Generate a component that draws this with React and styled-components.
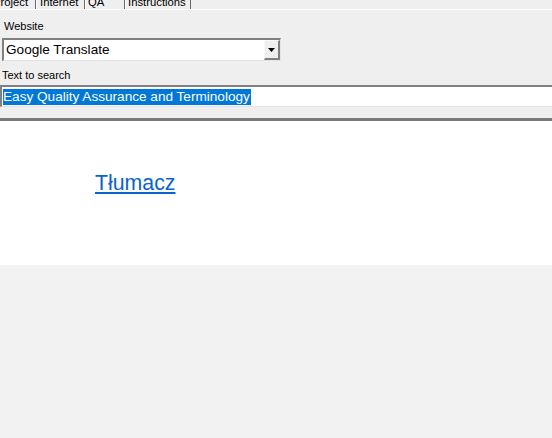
import React from 'react';
import styled, { createGlobalStyle } from 'styled-components';

const GlobalStyle = createGlobalStyle`
  html, body {
    margin: 0;
    padding: 0;
    background: #f2f2f2;
  }
  body {
    font-family: "Liberation Sans", Arial, sans-serif;
  }
`;

const tabs = [
  { name: 'Project', width: 36, first: true },
  { name: 'Internet', width: 49, active: true },
  { name: 'QA', width: 40 },
  { name: 'Instructions', width: 66 },
];

export default function App() {
  return (
    <>
      <GlobalStyle />
      <S_Page>
        <S_Panel>
          <S_TabStrip>
            {tabs.map((tab) => (
              <S_Tab
                key={tab.name}
                $active={tab.active}
                $first={tab.first}
                $width={tab.width}
              >
                {tab.name}
              </S_Tab>
            ))}
          </S_TabStrip>
          <S_Label $indent={4} $top={10} $bottom={5}>Website</S_Label>
          <S_Select>
            <S_SelectValue>Google Translate</S_SelectValue>
            <S_DropButton>
              <svg width="7" height="4" viewBox="0 0 7 4">
                <path d="M0 0h7L3.5 4z" fill="#000" />
              </svg>
            </S_DropButton>
          </S_Select>
          <S_Label $indent={2} $top={8} $bottom={3}>Text to search</S_Label>
          <S_Input>
            <S_Selected>Easy Quality Assurance and Terminology</S_Selected>
          </S_Input>
        </S_Panel>
        <S_Browser>
          <S_Link href="#">Tłumacz</S_Link>
        </S_Browser>
      </S_Page>
    </>
  );
}

const S_Page = styled.div`
  width: 552px;
  height: 438px;
  background: #f2f2f2;
  overflow: hidden;
`;

const S_Panel = styled.div`
  background: #efefef;
  height: 118px;
  border-bottom: 3px solid #7a7a7a;
  box-sizing: content-box;
  display: flex;
  flex-direction: column;
`;

const S_TabStrip = styled.div`
  display: flex;
  height: 10px;
  flex: none;
  overflow: hidden;
  border-bottom: 1px solid #ffffff;
  box-sizing: border-box;
`;

const S_Tab = styled.div`
  flex: none;
  width: ${(p) => p.$width}px;
  box-sizing: border-box;
  height: 12px;
  margin-top: -3px;
  margin-bottom: ${(p) => (p.$active ? -1 : 0)}px;
  background: #efefef;
  border-left: ${(p) => (p.$first ? 'none' : '1px solid #ffffff')};
  border-right: 1px solid #696969;
  font-size: 11.3px;
  line-height: 10px;
  color: #000;
  padding-left: ${(p) => (p.$first ? 0 : p.$active ? 3 : 2)}px;
  text-indent: ${(p) => (p.$first ? -7 : 0)}px;
  white-space: nowrap;
  overflow: hidden;
`;

const S_Label = styled.div`
  flex: none;
  font-size: 11px;
  line-height: 13px;
  color: #000;
  padding-left: ${(p) => p.$indent}px;
  margin-top: ${(p) => p.$top}px;
  margin-bottom: ${(p) => p.$bottom}px;
`;

const S_Select = styled.div`
  flex: none;
  display: flex;
  align-items: stretch;
  margin-left: 2px;
  width: 279px;
  height: 23px;
  box-sizing: border-box;
  background: #fff;
  border-top: 2px solid #808080;
  border-left: 2px solid #808080;
  border-right: 1px solid #e3e3e3;
  border-bottom: 1px solid #e3e3e3;
`;

const S_SelectValue = styled.div`
  flex: 1;
  font-size: 13.6px;
  line-height: 20px;
  padding-left: 2px;
  color: #000;
`;

const S_DropButton = styled.div`
  width: 16px;
  display: flex;
  align-items: center;
  justify-content: center;
  background: #efefef;
  box-sizing: border-box;
  border-top: 1px solid #f8f8f8;
  border-left: 1px solid #f8f8f8;
  border-right: 2px solid #808080;
  border-bottom: 2px solid #808080;
`;

const S_Input = styled.div`
  flex: none;
  height: 22px;
  box-sizing: border-box;
  background: #fff;
  border-top: 2px solid #808080;
  border-left: 2px solid #808080;
  border-bottom: 1px solid #e3e3e3;
  padding: 0 0 0 1px;
  display: flex;
  align-items: center;
`;

const S_Selected = styled.span`
  background: #0078d7;
  color: #fff;
  font-size: 13.6px;
  line-height: 16px;
  padding: 0 1px 0 0;
`;

const S_Browser = styled.div`
  background: #fff;
  height: 144px;
  padding: 51px 0 0 95px;
  box-sizing: border-box;
`;

const S_Link = styled.a`
  font-family: "Liberation Sans", Arial, sans-serif;
  font-size: 21.3px;
  line-height: 22px;
  color: #0b63ce;
  text-decoration: underline;
`;
